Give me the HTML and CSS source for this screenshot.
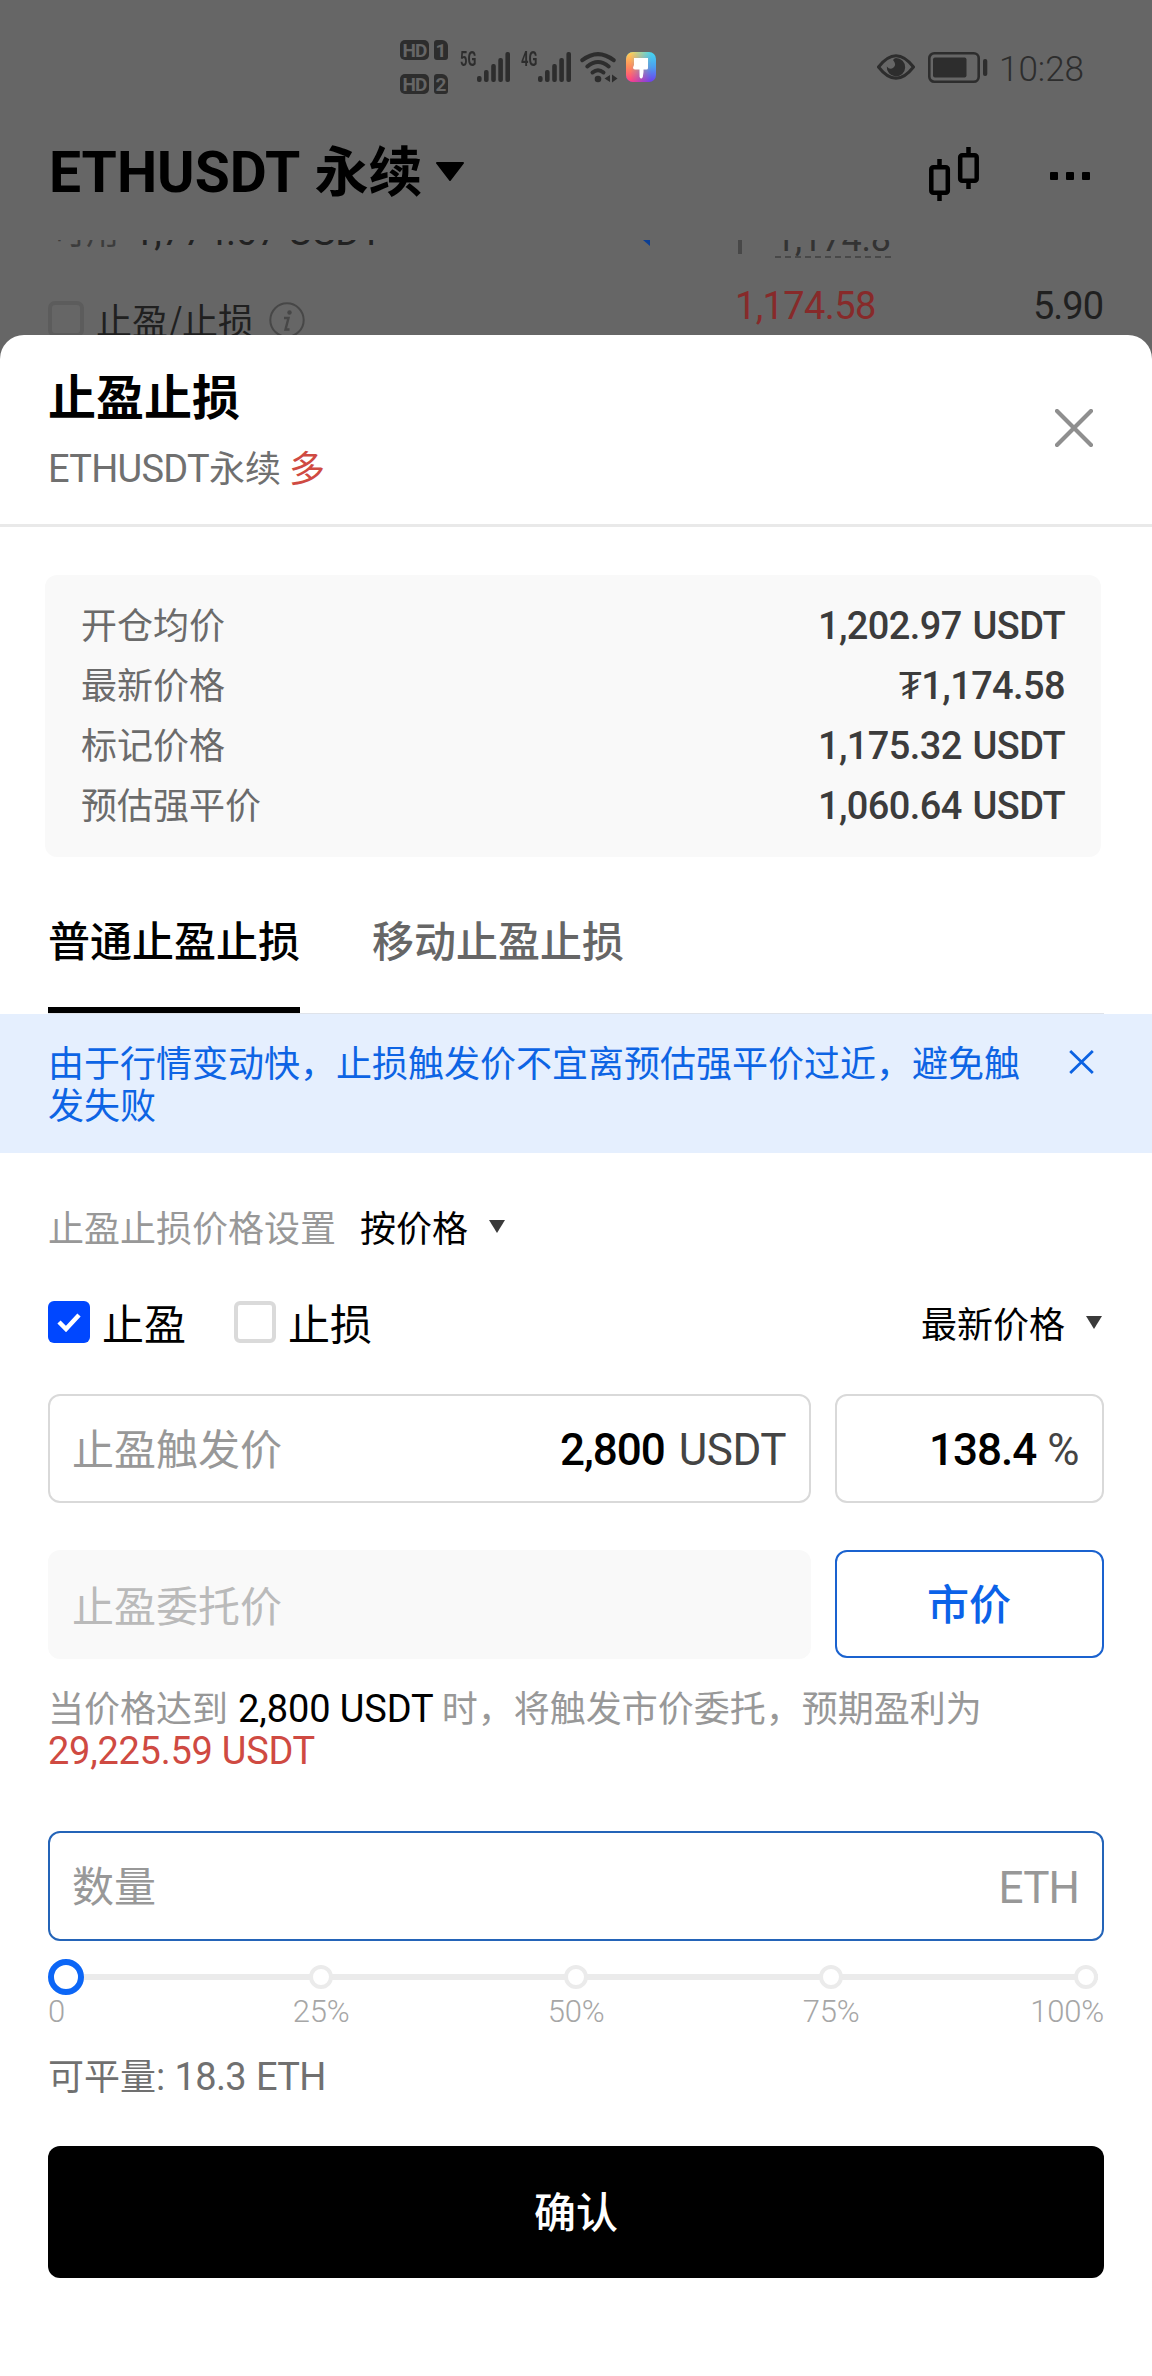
FILE: index.html
```html
<!DOCTYPE html>
<html lang="zh-CN">
<head>
<meta charset="utf-8">
<title>止盈止损</title>
<link rel="stylesheet" href="styles.css">
</head>
<body>
<div class="backdrop">
  <div class="status">
    <div class="sims">
      <div class="sim"><span class="hd">HD</span><span class="slot">1</span></div>
      <div class="sim"><span class="hd">HD</span><span class="slot">2</span></div>
    </div>
    <span class="net net5">5G</span>
    <svg class="bars" width="34" height="30" viewBox="0 0 34 30"><g fill="#2d2d2d"><rect x="0" y="24" width="4.6" height="6" rx="2"/><rect x="7" y="18" width="4.6" height="12" rx="2"/><rect x="14.2" y="12" width="4.6" height="18" rx="2"/><rect x="21.3" y="6" width="4.6" height="24" rx="2"/><rect x="28.4" y="0" width="4.6" height="30" rx="2"/></g></svg>
    <span class="net net4">4G</span>
    <svg class="bars" width="34" height="30" viewBox="0 0 34 30"><g fill="#2d2d2d"><rect x="0" y="24" width="4.6" height="6" rx="2"/><rect x="7" y="18" width="4.6" height="12" rx="2"/><rect x="14.2" y="12" width="4.6" height="18" rx="2"/><rect x="21.3" y="6" width="4.6" height="24" rx="2"/><rect x="28.4" y="0" width="4.6" height="30" rx="2"/></g></svg>
    <svg class="wifi" width="38" height="31" viewBox="0 0 38 31"><g fill="none" stroke="#2d2d2d" stroke-width="4" stroke-linecap="round"><path d="M2.300 8.200Q18 -4 33.700 8.200"/><path d="M7.300 14.500Q18 5.500 28.700 14.500"/><path d="M12.500 20.500Q18 16 23.500 20.500"/></g><circle cx="18" cy="27" r="3.300" fill="#2d2d2d"/><path d="M24.500 26.500L30 23V30ZM32 22.500L37.500 26.500L32 30.500Z" fill="#2d2d2d"/></svg>
    <svg class="theme" width="30" height="30" viewBox="0 0 30 30">
      <defs><linearGradient id="warm" x1="0" y1="0" x2="0" y2="1"><stop offset="0" stop-color="#ffd257"/><stop offset=".5" stop-color="#ff8a5c"/><stop offset="1" stop-color="#ff3d86"/></linearGradient><linearGradient id="cool" x1="0" y1="0" x2="0" y2="1"><stop offset="0" stop-color="#45d8f0"/><stop offset=".5" stop-color="#4c9ff0"/><stop offset="1" stop-color="#6e3ff0"/></linearGradient><linearGradient id="fade"><stop offset=".15" stop-color="#fff"/><stop offset=".85" stop-color="#000"/></linearGradient><mask id="blend"><rect width="30" height="30" fill="url(#fade)"/></mask></defs>
      <rect width="30" height="30" rx="7" fill="url(#cool)"/><rect width="30" height="30" rx="7" fill="url(#warm)" mask="url(#blend)"/>
      <path d="M8 6H22V16Q22 17.500 20.500 17.500H17.500V20L16.800 25Q15.200 28 13.600 25L13.500 20V17.500H9Q7 17.500 7 15.500L8 13Z" fill="#fff"/>
    </svg>
    <svg class="eye" width="38" height="26" viewBox="0 0 38 26"><path d="M1.500 13Q19 -9.500 36.500 13Q19 35.500 1.500 13Z" fill="none" stroke="#2d2d2d" stroke-width="3"/><path d="M19 4A9.200 9.200 0 1 1 9.800 12.500Q13 16.500 16.500 13.500T16 6Q17.500 4 19 4Z" fill="#2d2d2d"/></svg>
    <svg class="battery" width="60" height="31" viewBox="0 0 60 31"><rect x="1.300" y="1.300" width="49.400" height="28.400" rx="5" fill="none" stroke="#2d2d2d" stroke-width="2.600"/><rect x="5" y="5.500" width="33.500" height="20" rx="2" fill="#2d2d2d"/><rect x="55" y="7" width="4.300" height="17" rx="2" fill="#2d2d2d"/></svg>
    <span class="clock">10:28</span>
  </div>

  <div class="header">
    <h1 class="pair"><span class="latin">ETHUSDT</span> 永续</h1>
    <svg class="pair-caret" width="28" height="19" viewBox="0 0 28 19"><path d="M1 1H27L14 18Z" stroke="#000" stroke-width="2" stroke-linejoin="round"/></svg>
    <svg class="candles" width="51" height="54" viewBox="0 0 51 54"><g fill="none" stroke="#000" stroke-width="4.500"><rect x="2.300" y="20.300" width="16.500" height="25.500" rx="2"/><path d="M10.500 12V20M10.500 46V54"/><rect x="31.200" y="8.300" width="16.500" height="25.500" rx="2"/><path d="M39.500 0V8M39.500 34V42"/></g></svg>
    <div class="more"><i></i><i></i><i></i></div>
  </div>

  <div class="trade">
    <div class="available">
      <span class="avail-label">可用</span><span class="latin avail-num">1,774.07 USDT</span>
      <svg class="corner" width="7" height="6" viewBox="0 0 7 6"><path d="M0 0H7V6Z" fill="#0c3f94"/></svg>
      <i class="mark-bar"></i><span class="latin mark">1,174.8</span>
    </div>
    <div class="option">
      <i class="ghost-box"></i><span class="option-label">止盈/止损</span>
      <svg class="info" width="36" height="36" viewBox="0 0 36 36"><circle cx="18" cy="18" r="16.700" fill="none" stroke="#474747" stroke-width="2"/><circle cx="20.500" cy="10.500" r="2.200" fill="#474747"/><path d="M15 16H19.500L16.500 27.500H20.500" fill="none" stroke="#474747" stroke-width="2.400"/></svg>
      <span class="latin ask">1,174.58</span><span class="latin amount">5.90</span>
    </div>
  </div>
</div>

<main class="sheet">
  <div class="sheet-head">
    <div>
      <h2 class="title">止盈止损</h2>
      <p class="subtitle"><span class="latin">ETHUSDT</span>永续 <span class="side">多</span></p>
    </div>
    <svg class="close" width="38" height="38" viewBox="0 0 38 38"><path d="M2 2L36 36M36 2L2 36" stroke="#8f8f8f" stroke-width="4.200" stroke-linecap="round"/></svg>
  </div>

  <dl class="prices">
    <div><dt>开仓均价</dt><dd class="latin">1,202.97 USDT</dd></div>
    <div><dt>最新价格</dt><dd class="latin">₮1,174.58</dd></div>
    <div><dt>标记价格</dt><dd class="latin">1,175.32 USDT</dd></div>
    <div><dt>预估强平价</dt><dd class="latin">1,060.64 USDT</dd></div>
  </dl>

  <div class="tabs"><span class="tab active">普通止盈止损</span><span class="tab">移动止盈止损</span></div>

  <div class="notice">
    <p>由于行情变动快，止损触发价不宜离预估强平价过近，避免触发失败</p>
    <svg width="25" height="24" viewBox="0 0 25 24"><path d="M1.200 1L23.800 23M23.800 1L1.200 23" stroke="#0b62e2" stroke-width="2.800"/></svg>
  </div>

  <div class="mode"><span class="mode-label">止盈止损价格设置</span><span>按价格</span><svg class="caret" width="16" height="13" viewBox="0 0 16 13"><path d="M0 0H16L8 13Z"/></svg></div>

  <div class="checks">
    <span class="box checked"><svg width="24" height="20" viewBox="0 0 24 20"><path d="M2 10L9 17L22 3" fill="none" stroke="#fff" stroke-width="4.500"/></svg></span><span class="check-label">止盈</span>
    <span class="box"></span><span class="check-label">止损</span>
    <span class="basis">最新价格</span><svg class="caret" width="16" height="13" viewBox="0 0 16 13"><path d="M0 0H16L8 13Z"/></svg>
  </div>

  <div class="fields">
    <div class="field"><span class="placeholder">止盈触发价</span><span class="latin value">2,800</span><span class="latin unit">USDT</span></div>
    <div class="field"><span class="latin value percent">138.4</span><span class="latin unit pct">%</span></div>
  </div>
  <div class="fields second">
    <div class="field disabled"><span class="placeholder">止盈委托价</span></div>
    <div class="field market">市价</div>
  </div>

  <p class="hint">当价格达到 <span class="latin strong">2,800 USDT</span> 时，将触发市价委托，预期盈利为<br><span class="latin profit">29,225.59 USDT</span></p>

  <div class="field quantity"><span class="placeholder">数量</span><span class="latin eth">ETH</span></div>

  <div class="slider"><i class="thumb"></i><i class="tick"></i><i class="tick"></i><i class="tick"></i><i class="tick"></i></div>
  <div class="scale latin"><span>0</span><span>25%</span><span>50%</span><span>75%</span><span>100%</span></div>

  <p class="closable">可平量<span class="latin">: 18.3 ETH</span></p>
  <div class="confirm">确认</div>
</main>
</body>
</html>
```
FILE: styles.css
```css
* { box-sizing: border-box; margin: 0; padding: 0; }
body {
  width: 1152px;
  min-height: 2376px;
  background: #666;
  font-family: "Noto Sans CJK SC", sans-serif;
  font-size: 36px;
  line-height: 42px;
  color: #000;
}
i { display: block; flex: none; }
svg { display: block; flex: none; }
.latin {
  font-family: Roboto, "Noto Sans CJK SC", sans-serif;
  font-size: 1.055em;
  line-height: 0;
  white-space: pre;
}

/* dimmed page behind the sheet */
.backdrop { height: 335px; overflow: hidden; }
.status { display: flex; height: 100px; padding: 40px 0 0 400px; color: #2d2d2d; }
.sims { display: flex; flex-direction: column; gap: 14px; width: 60px; }
.sim { display: flex; gap: 5px; height: 20px; }
.hd, .slot {
  background: #2d2d2d;
  color: #666;
  font: 700 19px/21px Roboto, sans-serif;
  text-align: center;
  border-radius: 5px;
}
.hd { width: 29px; letter-spacing: -1px; }
.slot { width: 14px; border-radius: 3px 6px 3px 3px; }
.net { font: 700 20px/20px Roboto, sans-serif; margin-top: 9px; transform-origin: left; transform: scaleX(.65); width: 17px; }
.net4 { margin-left: 10px; width: 17px; }
.bars { margin-top: 12px; }
.wifi { margin: 12px 0 0 8px; }
.theme { margin: 12px 0 0 8px; }
.eye { margin: 14px 0 0 221px; }
.battery { margin: 12px 0 0 13px; }
.clock { font: 300 35px/42px Roboto, sans-serif; margin: 9px 0 0 11px; white-space: nowrap; }

.header { display: flex; height: 140px; padding: 47px 62px 0 49px; }
.pair { margin-top: -2px; font-size: 54px; font-weight: 700; line-height: 47px; width: 387px; white-space: nowrap; }
.pair .latin { margin-right: 2px; }
.pair-caret { margin-top: 15px; }
.candles { margin: 0 0 0 465px; }
.more { display: flex; gap: 8px; margin: 25px 0 0 auto; }
.more i { width: 8px; height: 8px; background: #000; border-radius: 1px; }

.trade { height: 95px; overflow: hidden; }
.available { display: flex; height: 61px; }
.avail-label { margin: -22px 0 0 53px; width: 80px; font-size: 33px; line-height: 24px; color: #3c3c3c; }
.avail-num { width: 510px; margin-top: -8px; font-size: 38px; color: #222; }
.mark-bar { width: 4px; height: 14px; margin-left: 88px; background: #484848; }
.mark { height: 36px; margin: -18px 0 0 33px; line-height: 34px; font-size: 36px; color: #333; letter-spacing: -.3px; border-bottom: 2px dashed #484848; }
.option { display: flex; padding-left: 48px; }
.ghost-box { width: 36px; height: 36px; border: 4px solid #5c5c5c; border-radius: 7px; }
.option-label { margin: -3px 0 0 12px; width: 173px; color: #202020; }
.info { margin-top: 1px; }
.ask { width: 298px; margin-left: 430px; margin-top: 5px; color: #872a2a; letter-spacing: -.6px; }
.amount { margin-top: 5px; color: #202020; letter-spacing: -1px; }

.sheet { height: 2041px; background: #fff; border-radius: 24px 24px 0 0; }
.sheet-head { display: flex; justify-content: space-between; height: 192px; padding: 35px 59px 0 48px; border-bottom: 3px solid #e9e9e9; }
.title { font-size: 48px; line-height: 48px; }
.subtitle { margin-top: 27px; color: #707070; }
.subtitle .latin { letter-spacing: -.7px; }
.side { color: #cf4a42; }
.close { margin-top: 39px; }

.prices { width: 1056px; height: 282px; margin: 48px 0 0 45px; padding: 18px 36px; background: #f9f9f9; border-radius: 12px; }
.prices div { display: flex; justify-content: space-between; height: 60px; line-height: 60px; }
.prices dt { color: #6b6b6b; }
.prices dd { line-height: 66px; font-weight: 500; color: #3c3c3c; letter-spacing: -.6px; word-spacing: 2px; }

.tabs { display: flex; gap: 72px; height: 157px; margin-left: 48px; width: 1056px; border-bottom: 1px solid #dfe3ea; }
.tab { height: 156px; padding-top: 55px; font-size: 42px; line-height: 54px; color: #666; font-weight: 500; }
.tab.active { color: #000; border-bottom: 6px solid #000; }

.notice { display: flex; justify-content: space-between; height: 139px; padding: 26px 58px 0 48px; background: #e5effe; color: #0d64e4; }
.notice p { width: 975px; }
.notice svg { margin-top: 10px; }

.mode { display: flex; height: 42px; margin: 52px 0 0 48px; }
.mode-label { width: 312px; color: #989898; }
.mode .caret { margin: 15px 0 0 21px; }
.caret { fill: #3a3a3a; }

.checks { display: flex; height: 42px; margin: 54px 50px 0 48px; }
.box { display: flex; align-items: center; justify-content: center; width: 42px; height: 42px; border: 4px solid #dadada; border-radius: 6px; }
.box.checked { background: #0047ff; border: 0; }
.check-label { width: 144px; padding-left: 12px; font-size: 42px; line-height: 41px; }
.basis { margin-left: auto; }
.checks .caret { margin: 15px 0 0 21px; }

.fields { display: grid; grid-template-columns: 763px 269px; gap: 24px; margin: 51px 48px 0; }
.fields.second { margin-top: 47px; }
.field { display: flex; height: 109px; padding: 0 23px 0 22px; border: 2px solid #d9d9d9; border-radius: 12px; font-size: 42px; line-height: 102px; }
.field .latin { font-size: 44px; line-height: 109px; }
.placeholder { flex: 1; color: #989898; }
.field .value { font-weight: 500; letter-spacing: -1px; }
.percent { margin-left: auto; }
.unit { margin-left: 14px; color: #444; letter-spacing: -.5px; }
.pct { margin-left: 11px; }
.disabled { background: #f9f9f9; border-color: #f9f9f9; line-height: 103px; }
.disabled .placeholder { color: #bababa; }
.market { height: 108px; justify-content: center; border-color: #1a62cf; color: #0b62e8; font-weight: 500; line-height: 99px; }

.hint { margin: 26px 48px 0; color: #989898; white-space: nowrap; }
.strong { color: #000; margin-left: 2px; letter-spacing: -.1px; }
.profit { color: #cf4a42; letter-spacing: -.25px; }

.quantity { margin: 62px 48px 0; height: 110px; border-color: #2464b8; }
.field .eth { color: #989898; letter-spacing: -.9px; line-height: 110px; }

/* the track runs edge to edge, the stops sit on the quarter points */
.slider { display: flex; align-items: center; justify-content: space-between; height: 36px; margin: 18px 54px 0 54px; background: linear-gradient(#ebebeb, #ebebeb) center / 100% 6px no-repeat; }
.thumb { width: 36px; height: 36px; margin: 0 -6px; border: 6px solid #0c66f6; border-radius: 50%; background: #fff; }
.tick { width: 24px; height: 24px; border: 4px solid #ebebeb; border-radius: 50%; background: #fff; }
.scale { display: grid; grid-template-columns: 145.5px 255px 255px 255px 145.5px; height: 33px; margin: 0 48px; font-size: 31px; line-height: 33px; font-weight: 300; color: #a6a6a6; text-align: center; letter-spacing: -.2px; }
.scale span:first-child { text-align: left; }
.scale span:last-child { text-align: right; }
.closable { margin: 25px 48px 0; line-height: 42px; color: #707070; }
.closable .latin { letter-spacing: -.6px; word-spacing: 1px; }
.confirm { height: 132px; margin: 51px 48px 0; border-radius: 12px; background: #000; color: #fff; font-size: 42px; font-weight: 500; line-height: 127px; text-align: center; }
```
